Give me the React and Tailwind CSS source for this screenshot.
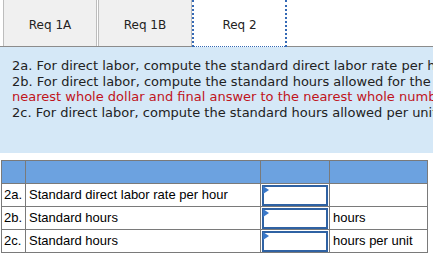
const rows = [
  { key: '2a.', label: 'Standard direct labor rate per hour', unit: '' },
  { key: '2b.', label: 'Standard hours', unit: 'hours' },
  { key: '2c.', label: 'Standard hours', unit: 'hours per unit' },
]

function AnswerCell() {
  return (
    <td className="relative p-0 border border-[#7a7a7a]">
      <div className="relative mx-px h-[21px] border-2 border-[#2f62a3] bg-white">
        <span className="absolute -left-px -top-px w-0 h-0 border-y-[4px] border-y-transparent border-l-[6px] border-l-[#3a78c8]" />
      </div>
    </td>
  )
}

export default function App() {
  return (
    <div className="w-[433px] h-[256px] overflow-hidden bg-white" style={{ fontFamily: 'Verdana, "DejaVu Sans", sans-serif' }}>
      <div className="flex h-[47px] border-b border-[#8c8c8c] text-[12px] text-[#222]">
        <div className="w-[3px]" />
        <div className="w-[94px] pt-1 flex items-center justify-center bg-[#f0f0f0] border-x border-[#bdbdbd]">Req 1A</div>
        <div className="w-px" />
        <div className="w-[94px] pt-1 flex items-center justify-center bg-[#f0f0f0] border-x border-[#bdbdbd]">Req 1B</div>
        <div className="w-[95px] pt-1 -mb-px flex items-center justify-center bg-white border-x-2 border-b border-dotted border-[#3469b5]">Req 2</div>
        <div className="flex-1" />
      </div>
      <div className="bg-[#d5e8f7] h-[106px] pl-3 pt-[11px] text-[13px] leading-[15.7px] text-[#222] whitespace-nowrap overflow-hidden">
        <p>2a. For direct labor, compute the standard direct labor rate per hour.</p>
        <p>2b. For direct labor, compute the standard hours allowed for the year's production. <span className="text-[#c0141c]">(Round your intermediate calculations to the</span></p>
        <p className="text-[#c0141c]">nearest whole dollar and final answer to the nearest whole number.)</p>
        <p>2c. For direct labor, compute the standard hours allowed per unit.</p>
      </div>
      <div className="pt-[7px] pl-px">
        <table className="w-[427px] border-collapse table-fixed text-[13px] text-black" style={{ fontFamily: 'Arial, "Liberation Sans", sans-serif' }}>
          <colgroup>
            <col className="w-[24px]" />
            <col className="w-[235px]" />
            <col className="w-[69px]" />
            <col />
          </colgroup>
          <tbody>
            <tr className="h-[23px] bg-[#6ca2e0]">
              <td className="border border-[#7a7a7a]" />
              <td className="border border-[#7a7a7a]" />
              <td className="border border-[#7a7a7a]" />
              <td className="border border-[#7a7a7a]" />
            </tr>
            {rows.map(r => (
              <tr key={r.key} className="h-[23px]">
                <td className="border border-[#7a7a7a] pl-[2px]">{r.key}</td>
                <td className="border border-[#7a7a7a] pl-[3px]">{r.label}</td>
                <AnswerCell />
                <td className="border border-[#7a7a7a] pl-[3px]">{r.unit}</td>
              </tr>
            ))}
          </tbody>
        </table>
      </div>
    </div>
  )
}
